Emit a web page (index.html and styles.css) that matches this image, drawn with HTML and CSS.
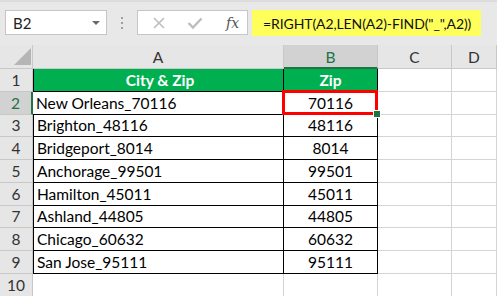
FILE: index.html
```html
<!DOCTYPE html>
<html lang="en">
<head>
    <meta charset="UTF-8">
    <title>City & Zip</title>
    <link rel="stylesheet" href="styles.css">
</head>
<body>
    <!-- formula bar -->
    <div class="formula-bar">
        <div class="name-box">
            <span>B2</span>
            <span class="drop"></span>
        </div>
        <div class="dots"><i></i><i></i><i></i></div>
        <div class="fx-box">
            <svg class="icon" width="14" height="14" viewBox="0 0 14 14"><path d="M2 2 L12 12 M12 2 L2 12" stroke="#bdbdbd" stroke-width="1.6" fill="none"/></svg>
            <svg class="icon" width="16" height="14" viewBox="0 0 16 14"><path d="M1.5 7 L6 11.5 L14.5 2.5" stroke="#bdbdbd" stroke-width="2.4" fill="none"/></svg>
            <span class="fx">fx</span>
        </div>
        <div class="formula">=RIGHT(A2,LEN(A2)-FIND("_",A2))</div>
    </div>

    <!-- sheet grid -->
    <div class="sheet">
        <div class="hd corner"><span class="tri"></span></div>
        <div class="hd col">A</div>
        <div class="hd col sel-col">B</div>
        <div class="hd col">C</div>
        <div class="hd col">D</div>

        <div class="hd row">1</div>
        <div class="cell t a title">City &amp; Zip</div>
        <div class="cell t b title">Zip</div>
        <div class="cell"></div>
        <div class="cell"></div>

        <div class="hd row sel-row">2</div>
        <div class="cell t a">New Orleans_70116</div>
        <div class="cell t b active">70116</div>
        <div class="cell"></div>
        <div class="cell"></div>

        <div class="hd row">3</div>
        <div class="cell t a">Brighton_48116</div>
        <div class="cell t b">48116</div>
        <div class="cell"></div>
        <div class="cell"></div>

        <div class="hd row">4</div>
        <div class="cell t a">Bridgeport_8014</div>
        <div class="cell t b">8014</div>
        <div class="cell"></div>
        <div class="cell"></div>

        <div class="hd row">5</div>
        <div class="cell t a">Anchorage_99501</div>
        <div class="cell t b">99501</div>
        <div class="cell"></div>
        <div class="cell"></div>

        <div class="hd row">6</div>
        <div class="cell t a">Hamilton_45011</div>
        <div class="cell t b">45011</div>
        <div class="cell"></div>
        <div class="cell"></div>

        <div class="hd row">7</div>
        <div class="cell t a">Ashland_44805</div>
        <div class="cell t b">44805</div>
        <div class="cell"></div>
        <div class="cell"></div>

        <div class="hd row">8</div>
        <div class="cell t a">Chicago_60632</div>
        <div class="cell t b">60632</div>
        <div class="cell"></div>
        <div class="cell"></div>

        <div class="hd row">9</div>
        <div class="cell t a">San Jose_95111</div>
        <div class="cell t b">95111</div>
        <div class="cell"></div>
        <div class="cell"></div>

        <div class="hd row">10</div>
        <div class="cell"></div>
        <div class="cell"></div>
        <div class="cell"></div>
        <div class="cell"></div>
    </div>
</body>
</html>
```

FILE: styles.css
```css
* {
    box-sizing: border-box;
}

body {
    margin: 0;
    width: 497px;
    height: 296px;
    overflow: hidden;
    background-color: #ffffff;
    font-family: Lato, "Liberation Sans", sans-serif;
    font-size: 15.5px;
    color: #000;
}

/* 公式列 */
.formula-bar {
    height: 45px;
    background-color: #e8e8e8;
    display: flex;
    align-items: flex-start;
    padding-top: 10px;
    padding-left: 5px;
    border-top: 2px solid #dcdcdc;
    font-size: 15px;
}

.name-box {
    width: 102px;
    height: 25px;
    margin-top: -2px;
    background-color: #fff;
    border: 1px solid #c6c6c6;
    display: flex;
    align-items: center;
    justify-content: space-between;
    padding: 0 6px 0 7px;
    color: #222;
}

.drop {
    width: 0;
    height: 0;
    border-left: 4px solid transparent;
    border-right: 4px solid transparent;
    border-top: 4px solid #6a6a6a;
}

.dots {
    width: 30px;
    height: 25px;
    margin-top: -2px;
    display: flex;
    flex-direction: column;
    align-items: center;
    justify-content: center;
    gap: 3px;
}

.dots i {
    width: 2px;
    height: 2px;
    background-color: #a0a0a0;
}

.fx-box {
    width: 111px;
    height: 25px;
    margin-top: -2px;
    background-color: #fff;
    border: 1px solid #c6c6c6;
    display: flex;
    align-items: center;
    padding-left: 14px;
    gap: 21px;
}

.fx {
    font-family: "DejaVu Serif", "Liberation Serif", serif;
    font-style: italic;
    font-size: 14px;
    color: #555;
    margin-left: 2px;
}

.formula {
    width: 229px;
    height: 26px;
    margin-left: 4px;
    margin-top: -2px;
    background-color: #ffff5b;
    display: flex;
    align-items: center;
    padding-left: 11px;
    color: #111;
    white-space: nowrap;
    font-size: 14px;
    letter-spacing: -0.1px;
}

/* 試算表 */
.sheet {
    display: grid;
    grid-template-columns: 33px 251px 94px 74px 45px;
    grid-template-rows: 24px repeat(10, 22.75px);
}

.hd {
    background-color: #e6e6e6;
    border-right: 1px solid #c8c8c8;
    border-bottom: 1px solid #c8c8c8;
    display: flex;
    align-items: center;
    justify-content: center;
    color: #333;
}

.corner {
    justify-content: flex-end;
    align-items: flex-end;
    padding: 0 1px 3px 0;
}

.tri {
    width: 0;
    height: 0;
    border-left: 17px solid transparent;
    border-bottom: 17px solid #b5b5b5;
}

.col {
    padding-top: 1px;
}

.sel-col {
    background-color: #d2d2d2;
    border-bottom: 2px solid #217346;
    color: #217346;
}

.row {
    background-color: #e6e6e6;
}

.sel-row {
    background-color: #d2d2d2;
    border-right: 2px solid #217346;
    color: #217346;
}

.cell {
    border-right: 1px solid #d4d4d4;
    border-bottom: 1px solid #d4d4d4;
    display: flex;
    align-items: center;
    white-space: nowrap;
}

/* 表格框線 */
.t {
    border-right: 1px solid #000;
    border-bottom: 1px solid #000;
}

.a {
    border-left: 1px solid #000;
    padding-left: 3px;
}

.sel-row + .a {
    border-left: none;
}

.b {
    justify-content: center;
}

.title {
    background-color: #00b050;
    color: #fff;
    font-weight: bold;
    justify-content: center;
}

/* 作用中的儲存格 */
.active {
    position: relative;
}

.active::before {
    content: "";
    position: absolute;
    left: -2px;
    top: -2px;
    right: -1px;
    bottom: -1px;
    border: 3px solid #ff0000;
    z-index: 1;
}

.active::after {
    content: "";
    position: absolute;
    right: -4px;
    bottom: -4px;
    width: 6px;
    height: 6px;
    background-color: #217346;
    border: 1px solid #fff;
    z-index: 2;
}
```
